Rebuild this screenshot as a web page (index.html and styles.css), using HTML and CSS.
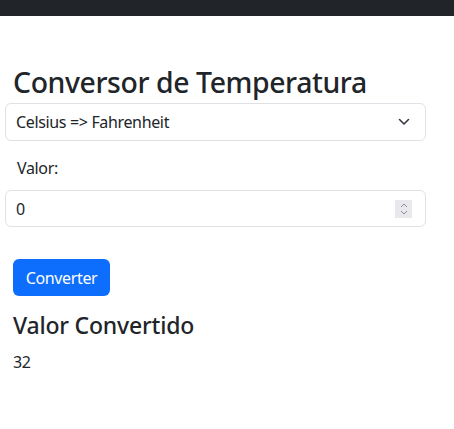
FILE: index.html
```html
<!DOCTYPE html>
<html lang="pt">
<head>
<meta charset="utf-8">
<link rel="stylesheet" href="styles.css">
</head>
<body>
<nav class="topbar"></nav>
<main class="page">
  <h1 class="title">Conversor de Temperatura</h1>
  <div class="select">
    <span>Celsius =&gt; Fahrenheit</span>
    <svg class="chev" width="12" height="8" viewBox="0 0 12 8"><path d="M1.5 1.5l4.5 4.5 4.5-4.5" fill="none" stroke="#343a40" stroke-width="1.6" stroke-linecap="round" stroke-linejoin="round"/></svg>
  </div>
  <label class="label">Valor:</label>
  <div class="field">
    <span class="value">0</span>
    <span class="spin">
      <svg width="8" height="14" viewBox="0 0 8 14"><path d="M1 5l3-3 3 3M1 9l3 3 3-3" fill="none" stroke="#8d8d96" stroke-width="1"/></svg>
    </span>
  </div>
  <button class="btn">Converter</button>
  <h3 class="sub">Valor Convertido</h3>
  <p class="result">32</p>
</main>
</body>
</html>
```
FILE: styles.css
```css
* { box-sizing: border-box; }
html, body { margin: 0; padding: 0; background: #fff; }
body {
  font-family: "Noto Sans", "Open Sans", sans-serif;
  font-size: 16px;
  letter-spacing: -0.35px;
  color: #212529;
  width: 454px;
  height: 429px;
  overflow: hidden;
}
.topbar { height: 16px; background: #212529; }
.page { padding: 0 28px 0 5px; display: flex; flex-direction: column; align-items: flex-start; }
.title {
  margin: 49px 0 0 8px;
  font-size: 28.4px;
  font-weight: 500;
  line-height: 1.2;
  letter-spacing: -0.4px;
}
.select, .field {
  width: 421px;
  height: 38px;
  border: 1px solid #dee2e6;
  border-radius: 6px;
  display: flex;
  align-items: center;
  padding: 0 12px 0 10px;
  justify-content: space-between;
  position: relative;
}
.select { margin-top: 4px; }
.chev { margin-right: 3px; }
.label { margin: 15px 0 0 12px; line-height: 24px; }
.field { margin-top: 10px; height: 37px; }
.spin {
  width: 17px; height: 18px; background: #e9e9ed;
  display: flex; align-items: center; justify-content: center;
  margin-right: 1px;
}
.btn {
  margin: 32px 0 0 8px;
  width: 97px; height: 37px;
  background: #0d6efd; color: #fff;
  border: none; border-radius: 6px;
  font-family: inherit; font-size: 16px; letter-spacing: inherit;
  padding: 0;
}
.sub {
  margin: 16px 0 0 8px;
  font-size: 23px;
  font-weight: 500;
  line-height: 1.2;
  letter-spacing: -0.2px;
}
.result { margin: 10px 0 0 8px; line-height: 24px; }
```
